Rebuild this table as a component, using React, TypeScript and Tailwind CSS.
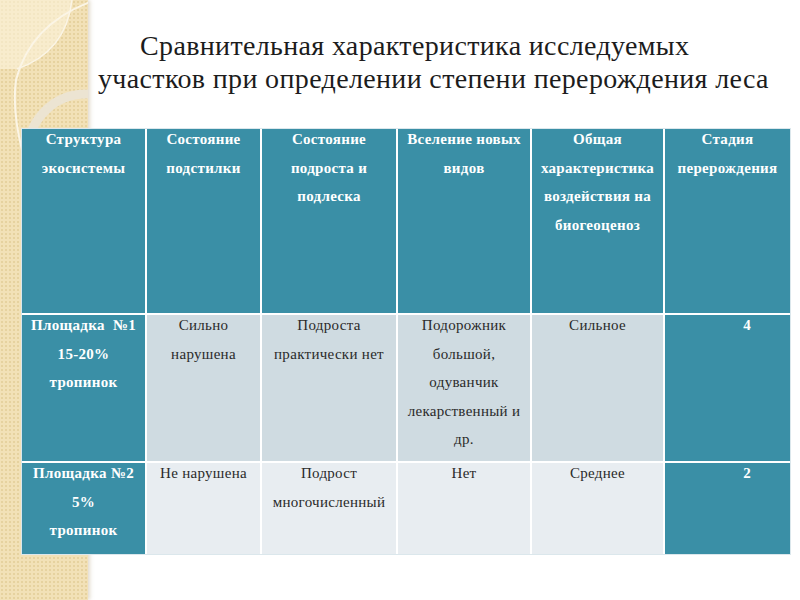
import React from "react";

const teal = "bg-[#3a8fa6]";

const headers = [
  ["Структура", "экосистемы"],
  ["Состояние", "подстилки"],
  ["Состояние", "подроста и", "подлеска"],
  ["Вселение новых", "видов"],
  ["Общая", "характеристика", "воздействия на", "биогеоценоз"],
  ["Стадия", "перерождения"],
];

const rows = [
  {
    bg: "bg-[#cfdbe1]",
    h: "h-[146px]",
    site: ["Площадка  №1", "15-20%", "тропинок"],
    cells: [
      ["Сильно", "нарушена"],
      ["Подроста", "практически нет"],
      ["Подорожник", "большой,", "одуванчик", "лекарственный и", "др."],
      ["Сильное"],
    ],
    stage: "4",
  },
  {
    bg: "bg-[#e8edf1]",
    h: "h-[91px]",
    site: ["Площадка №2", "5%", "тропинок"],
    cells: [["Не нарушена"], ["Подрост", "многочисленный"], ["Нет"], ["Среднее"]],
    stage: "2",
  },
];

function Lines({ lines }: { lines: string[] }) {
  return (
    <div className="-mt-[4px]">
      {lines.map((l, i) => (
        <div key={i} className="whitespace-pre">
          {l}
        </div>
      ))}
    </div>
  );
}

function SideStrip() {
  return (
    <div className="absolute left-0 top-0 h-[600px] w-[88px] bg-[#f2e1b7] bg-[radial-gradient(circle,#e6d29f_0.8px,transparent_1px)] bg-[length:4px_4px] shadow-[2px_0_4px_rgba(170,150,110,0.35)] overflow-hidden">
      <svg width="88" height="600" viewBox="0 0 88 600" className="absolute left-0 top-0">
        <path d="M0 0 L72 0 Q66 52 17 69 L0 69 Z" fill="#fbf3dc" opacity="0.6" />
        <path d="M72 0 Q66 52 17 69" fill="none" stroke="#fbf5e6" strokeWidth="1.5" />
        <path d="M90 2 Q30 25 16 80 Q12 110 22 150" fill="none" stroke="#fbf5e6" strokeWidth="2" />
        <circle cx="86" cy="152" r="58" fill="none" stroke="#ece4d2" strokeWidth="9" />
      </svg>
    </div>
  );
}

export default function App() {
  return (
    <div className="relative w-[800px] h-[600px] bg-white overflow-hidden font-[family-name:'Liberation_Serif','Times_New_Roman',serif]">
      <SideStrip />
      <div className="relative">
        <h1 className="pt-[29px] pl-[98px] indent-[42px] text-[28px] leading-[33px] tracking-[0.35px] font-normal text-[#1c1c1c]">
          Сравнительная характеристика исследуемых
          <br />
          участков при определении степени перерождения леса
        </h1>

        <div className="mt-[34px] ml-[22px] w-[768px] grid grid-cols-[123px_113px_134px_132px_131px_125px] gap-[2px] bg-white shadow-[0_0_0_1px_#dbe7ec] text-[15px] leading-[28.5px] tracking-[0.3px]">
          {headers.map((h, i) => (
            <div key={i} className={`${teal} h-[184px] text-white font-bold text-center px-1`}>
              <Lines lines={h} />
            </div>
          ))}

          {rows.map((r, ri) => (
            <React.Fragment key={ri}>
              <div className={`${teal} ${r.h} text-white font-bold text-center px-1`}>
                <Lines lines={r.site} />
              </div>
              {r.cells.map((c, ci) => (
                <div key={ci} className={`${r.bg} ${r.h} text-[#2a2a2a] text-center px-1`}>
                  <Lines lines={c} />
                </div>
              ))}
              <div className={`${teal} ${r.h} text-white font-bold text-right pr-[39px]`}>
                <Lines lines={[r.stage]} />
              </div>
            </React.Fragment>
          ))}
        </div>
      </div>
    </div>
  );
}
